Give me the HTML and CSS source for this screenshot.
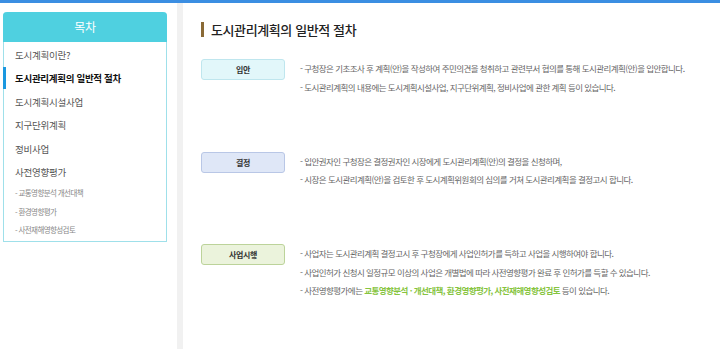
FILE: index.html
```html
<!DOCTYPE html>
<html lang="ko">
<head>
<meta charset="utf-8">
<link rel="stylesheet" href="styles.css">
</head>
<body>
<div class="topbar"></div>
<div class="layout">
  <aside class="side">
    <nav class="toc">
      <div class="toc-head">목차</div>
      <ul class="toc-list">
        <li class="item">도시계획이란?</li>
        <li class="item active">도시관리계획의 일반적 절차</li>
        <li class="item">도시계획시설사업</li>
        <li class="item">지구단위계획</li>
        <li class="item">정비사업</li>
        <li class="item">사전영향평가</li>
        <li class="sub">- 교통영향분석 개선대책</li>
        <li class="sub">- 환경영향평가</li>
        <li class="sub">- 사전재해영향성검토</li>
      </ul>
    </nav>
  </aside>
  <div class="divider"></div>
  <main class="main">
    <h1 class="title">도시관리계획의 일반적 절차</h1>
    <section class="step">
      <div class="badge badge-cyan">입안</div>
      <ul class="desc">
        <li>- 구청장은 기초조사 후 계획(안)을 작성하여 주민의견을 청취하고 관련부서 협의를 통해 도시관리계획(안)을 입안합니다.</li>
        <li>- 도시관리계획의 내용에는 도시계획시설사업, 지구단위계획, 정비사업에 관한 계획 등이 있습니다.</li>
      </ul>
    </section>
    <section class="step">
      <div class="badge badge-blue">결정</div>
      <ul class="desc">
        <li>- 입안권자인 구청장은 결정권자인 시장에게 도시관리계획(안)의 결정을 신청하며,</li>
        <li>- 시장은 도시관리계획(안)을 검토한 후 도시계획위원회의 심의를 거쳐 도시관리계획을 결정고시 합니다.</li>
      </ul>
    </section>
    <section class="step">
      <div class="badge badge-green">사업시행</div>
      <ul class="desc">
        <li>- 사업자는 도시관리계획 결정고시 후 구청장에게 사업인허가를 득하고 사업을 시행하여야 합니다.</li>
        <li>- 사업인허가 신청시 일정규모 이상의 사업은 개별법에 따라 사전영향평가 완료 후 인허가를 득할 수 있습니다.</li>
        <li>- 사전영향평가에는 <span class="hl">교통영향분석 · 개선대책, 환경영향평가, 사전재해영향성검토</span> 등이 있습니다.</li>
      </ul>
    </section>
  </main>
</div>
</body>
</html>
```

FILE: styles.css
```css
* { box-sizing: border-box; }
html, body { margin: 0; padding: 0; }
body {
  width: 720px;
  height: 349px;
  overflow: hidden;
  background: #fff;
  font-family: "Noto Sans CJK KR", "Noto Sans", sans-serif;
  color: #333;
}
ul { list-style: none; margin: 0; padding: 0; }

.topbar { height: 3px; background: #3b8ee2; }

.layout { display: flex; height: 346px; }

.side { width: 177px; padding: 9px 10px 0 3px; }

.toc {
  width: 164px;
  border: 1px solid #9fe0ea;
  border-top: none;
  border-radius: 4px 4px 0 0;
  background: #fff;
}
.toc-head {
  height: 30px;
  margin: 0 -1px;
  background: #4fd0e0;
  border-radius: 4px 4px 0 0;
  color: #fff;
  font-size: 12px;
  line-height: 30px;
  text-align: center;
  letter-spacing: -0.3px;
}
.toc-list { padding: 2px 0 1px; }
.item {
  position: relative;
  height: 23.4px;
  line-height: 23.4px;
  padding-left: 11px;
  font-size: 9.5px;
  letter-spacing: -0.25px;
  color: #555;
}
.item.active { color: #111; font-weight: 700; letter-spacing: -0.3px; }
.item.active::before {
  content: "";
  position: absolute;
  left: -1px;
  top: 0;
  width: 3px;
  height: 22px;
  background: #1a98e0;
}
.sub {
  height: 18.5px;
  line-height: 18.5px;
  padding-left: 11px;
  font-size: 7.5px;
  letter-spacing: -0.6px;
  color: #888;
}

.divider { width: 6px; background: #f1f1f1; }

.main { flex: 1; padding: 19px 0 0 18px; }

.title {
  margin: 0 0 22px;
  padding-left: 7px;
  border-left: 3px solid #8a6a36;
  height: 15px;
  line-height: 15px;
  font-size: 13px;
  font-weight: 500;
  letter-spacing: -0.4px;
  color: #222;
}

.step { display: flex; align-items: flex-start; margin-bottom: 55.5px; }

.badge {
  flex: none;
  width: 84px;
  height: 21px;
  line-height: 19px;
  border: 1px solid;
  border-radius: 3px;
  text-align: center;
  font-size: 8px;
  font-weight: 700;
  letter-spacing: -0.3px;
  color: #333;
}
.badge-cyan { background: #e2f7fa; border-color: #bfe6ee; }
.badge-blue { background: #dfe7f7; border-color: #b9c7e6; }
.badge-green { background: #ebf3dc; border-color: #bcd39a; }

.desc { margin-left: 15px; }
.desc li {
  height: 18.5px;
  line-height: 18.5px;
  font-size: 8.5px;
  letter-spacing: -0.55px;
  color: #666;
  white-space: nowrap;
}
.hl { color: #86c440; font-weight: 700; }
```
